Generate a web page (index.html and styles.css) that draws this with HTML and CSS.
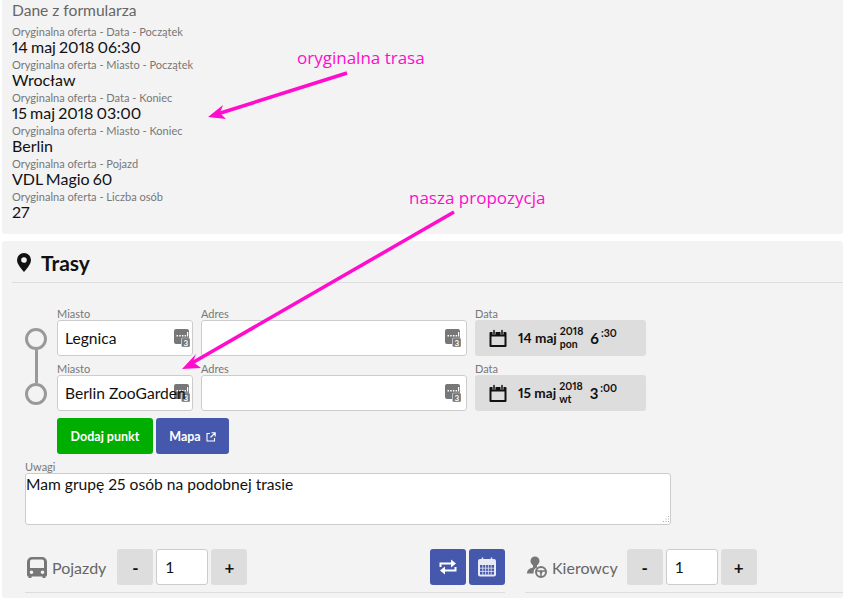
FILE: index.html
```html
<!DOCTYPE html>
<html lang="pl">
<head>
<meta charset="utf-8">
<title>Trasy</title>
<link rel="stylesheet" href="styles.css">
</head>
<body>
<svg width="0" height="0" class="defs">
  <symbol id="gsm" viewBox="0 0 16 18">
    <path d="M2 0h11a2 2 0 0 1 2 2v7H9a2 2 0 0 0-2 2v4H2a2 2 0 0 1-2-2V2a2 2 0 0 1 2-2z" fill="#777"/>
    <rect x="7.500" y="9" width="8.500" height="9" rx="1.500" fill="#777" stroke="#ccc" stroke-width=".5"/>
    <path d="M2.500 6h1.500v1.500H2.500zM5.200 6h1.500v1.500H5.200zM7.900 6h1.500v1.500H7.900zM10.600 6h1.500v1.500h-1.500zM13 3h1.200v4.500H13z" fill="#fff"/>
  </symbol>
  <symbol id="cal" viewBox="0 0 18 18">
    <path d="M1.500 3.500h15v13h-15z" fill="none" stroke="#111" stroke-width="2" stroke-linejoin="round"/>
    <path d="M1 3h16v4H1z" fill="#111"/>
    <path d="M5 1v4M13 1v4" stroke="#ddd" stroke-width="3"/>
    <path d="M5 1v3.500M13 1v3.500" stroke="#111" stroke-width="1.500" stroke-linecap="round"/>
  </symbol>
</svg>

<section class="card form-data">
  <h2 class="form-title">Dane z formularza</h2>
  <dl class="facts">
    <dt>Oryginalna oferta - Data - Początek</dt><dd>14 maj 2018 06:30</dd>
    <dt>Oryginalna oferta - Miasto - Początek</dt><dd>Wrocław</dd>
    <dt>Oryginalna oferta - Data - Koniec</dt><dd>15 maj 2018 03:00</dd>
    <dt>Oryginalna oferta - Miasto - Koniec</dt><dd>Berlin</dd>
    <dt>Oryginalna oferta - Pojazd</dt><dd>VDL Magio 60</dd>
    <dt>Oryginalna oferta - Liczba osób</dt><dd>27</dd>
  </dl>
</section>

<section class="card routes">
  <h2 class="routes-title">
    <svg class="pin" viewBox="0 0 14 19" width="14" height="19"><path fill-rule="evenodd" d="M7 0a7 7 0 0 1 7 7c0 4.500-5 9.500-7 12C5 16.500 0 11.500 0 7a7 7 0 0 1 7-7zm0 4.200a2.800 2.800 0 1 0 0 5.600 2.800 2.800 0 0 0 0-5.600z" fill="#111"/></svg>
    Trasy
  </h2>

  <div class="route">
    <div class="timeline"><span class="node"></span><span class="link"></span><span class="node"></span></div>
    <div class="stops">
      <div class="stop">
        <label class="field city"><span class="lbl">Miasto</span><span class="box"><svg class="gsm" viewBox="0 0 16 18"><use href="#gsm"/><text x="11.800" y="16.600" class="gsm-digit">3</text></svg><input class="inp" value="Legnica"></span></label>
        <label class="field addr"><span class="lbl">Adres</span><span class="box"><svg class="gsm" viewBox="0 0 16 18"><use href="#gsm"/><text x="11.800" y="16.600" class="gsm-digit">3</text></svg><input class="inp"></span></label>
        <div class="field date"><span class="lbl">Data</span>
          <div class="datebox"><svg class="cal"><use href="#cal"/></svg><span class="day">14 maj</span><span class="yw"><span>2018</span><span>pon</span></span><span class="hour">6</span><span class="min">:30</span></div>
        </div>
      </div>
      <div class="stop">
        <label class="field city"><span class="lbl">Miasto</span><span class="box"><svg class="gsm" viewBox="0 0 16 18"><use href="#gsm"/><text x="11.800" y="16.600" class="gsm-digit">3</text></svg><input class="inp" value="Berlin ZooGarden"></span></label>
        <label class="field addr"><span class="lbl">Adres</span><span class="box"><svg class="gsm" viewBox="0 0 16 18"><use href="#gsm"/><text x="11.800" y="16.600" class="gsm-digit">3</text></svg><input class="inp"></span></label>
        <div class="field date"><span class="lbl">Data</span>
          <div class="datebox"><svg class="cal"><use href="#cal"/></svg><span class="day">15 maj</span><span class="yw"><span>2018</span><span>wt</span></span><span class="hour">3</span><span class="min">:00</span></div>
        </div>
      </div>
      <div class="actions">
        <button class="btn green">Dodaj punkt</button>
        <button class="btn blue">Mapa
          <svg viewBox="0 0 10 10" width="10" height="10" class="ext"><path d="M4 1.500H1v7.500h7.500V6M5.500 .8h3.700v3.700M9 1L4.500 5.500" fill="none" stroke="#fff" stroke-width="1.100"/></svg>
        </button>
      </div>
    </div>
  </div>

  <label class="notes"><span class="lbl notes-lbl">Uwagi</span>
    <textarea class="area">Mam grupę 25 osób na podobnej trasie</textarea>
    <svg class="grip" viewBox="0 0 9 9" width="9" height="9"><path d="M7 1h1v1H7zM4.500 3.500h1v1h-1zM7 3.500h1v1H7zM2 6h1v1H2zM4.500 6h1v1h-1zM7 6h1v1H7z" fill="#aaa"/></svg>
  </label>

  <div class="counters">
    <div class="counter vehicles">
      <svg class="ico-bus" viewBox="0 0 20 21" width="20" height="21"><path fill-rule="evenodd" d="M5 0h10a5 5 0 0 1 5 5v13a1.500 1.500 0 0 1-1.500 1.500V21h-3v-1.500h-11V21h-3v-1.500A1.500 1.500 0 0 1 0 18V5a5 5 0 0 1 5-5zM3 4.500v6.500h14V4.500a2 2 0 0 0-2-2H5a2 2 0 0 0-2 2zM4.500 13.500a1.800 1.800 0 1 0 0 3.600 1.800 1.800 0 0 0 0-3.600zm11 0a1.800 1.800 0 1 0 0 3.600 1.800 1.800 0 0 0 0-3.600z" fill="#777"/></svg>
      <span class="cname">Pojazdy</span>
      <button class="step">-</button><input class="num" value="1"><button class="step">+</button>
      <div class="tools">
        <button class="tool"><svg viewBox="0 0 20 20" width="20" height="20"><path d="M2.500 10V6.500h11M17.500 10v3.500h-11" fill="none" stroke="#fff" stroke-width="2"/><path d="M13 2.500l5 4-5 4zM7 9.500l-5 4 5 4z" fill="#fff"/></svg></button>
        <button class="tool"><svg viewBox="0 0 20 20" width="20" height="20"><rect x="1" y="2" width="18" height="17.500" rx="2" fill="#e8eaf6"/><path d="M5.500 .5v4M14.500 .5v4" stroke="#e8eaf6" stroke-width="1.500"/><path d="M3 8h14v9.500H3z" fill="#4658ab"/><path d="M5.800 8v9.500M8.600 8v9.500M11.400 8v9.500M14.200 8v9.500M3 11.200h14M3 14.400h14" stroke="#e8eaf6" stroke-width=".8"/></svg></button>
      </div>
    </div>
    <div class="counter drivers">
      <svg class="ico-driver" viewBox="0 0 20 22" width="20" height="22"><circle cx="8" cy="5" r="4.500" fill="#777"/><path d="M6 9h4v2.500c-3 1-3.500 3-3.500 6H0c0-3.500 2-5 6-6z" fill="#777"/><circle cx="14" cy="16" r="5" fill="none" stroke="#777" stroke-width="2"/><circle cx="14" cy="16" r="1.500" fill="#777"/><path d="M9.500 15h9M14 16v5" stroke="#777" stroke-width="1.500"/></svg>
      <span class="cname">Kierowcy</span>
      <button class="step">-</button><input class="num" value="1"><button class="step">+</button>
    </div>
  </div>
</section>

<svg class="arrows" viewBox="0 0 843 598" width="843" height="598">
  <path d="M347 73L219 113.500" stroke="#ff0ccc" stroke-width="3.500" fill="none"/>
  <path d="M208 117L223 105L220 113L226 119z" fill="#ff0ccc"/>
  <path d="M454 212L192 363" stroke="#ff0ccc" stroke-width="3.500" fill="none"/>
  <path d="M182 369L196 354L193 362L201 368z" fill="#ff0ccc"/>
</svg>
<span class="note note-one">oryginalna trasa</span>
<span class="note note-two">nasza propozycja</span>
</body>
</html>
```

FILE: styles.css
```css
* { box-sizing: border-box; }
html, body { margin: 0; height: 598px; overflow: hidden; background: #fff; }
body { font-family: Lato, "Liberation Sans", sans-serif; font-variant-numeric: proportional-nums; color: #111; position: relative; }
.defs { position: absolute; }
.gsm-digit { font: 700 8px Lato, sans-serif; fill: #fff; text-anchor: middle; }

.card { background: #f3f3f3; margin-left: 2px; border-radius: 3px; }
.form-data { height: 234px; padding: 1px 10px 0; border-radius: 0 0 3px 3px; }
.form-title { margin: 0 0 4px; font-size: 15.600px; line-height: 19px; font-weight: 400; color: #666; }
.facts { margin: 0; }
.facts dt { font-size: 11.050px; line-height: 15px; color: #777; margin-top: 1px; }
.facts dd { margin: -1px 0 0; padding-bottom: 1px; font-size: 16px; line-height: 17px; word-spacing: -1px; color: #111; }

.routes { margin-top: 7px; height: 357px; overflow: hidden; padding: 0 0 0 10px; }
.routes-title { display: flex; align-items: center; gap: 10px; margin: 0; height: 42px; padding: 1px 0 0 5px; border-bottom: 1px solid #ddd; font-size: 21px; font-weight: 700; color: #111; }
.pin { flex: none; }

.route { display: flex; margin: 24px 0 0 13px; }
.timeline { display: flex; flex-direction: column; align-items: center; width: 22px; padding-top: 21px; flex: none; }
.node { width: 22px; height: 22px; border: 3px solid #999; border-radius: 50%; flex: none; }
.link { width: 3px; height: 33px; background: #999; flex: none; }

.stops { margin-left: 10px; display: flex; flex-direction: column; }
.stop { display: flex; gap: 8px; height: 55px; }
.field { display: flex; flex-direction: column; }
.lbl { font-size: 11px; line-height: 13px; height: 13px; color: #777; }
.city { width: 136px; }
.addr { width: 266px; }
.date { width: 171px; }
.box { position: relative; display: block; height: 36px; background: #fff; border-radius: 3px; }
.inp { position: relative; display: block; width: 100%; height: 36px; padding: 0 7px; border: 1px solid #ccc; border-radius: 3px; background: transparent; font: 15.600px Lato, sans-serif; font-variant-numeric: proportional-nums; color: #111; outline: none; }
.gsm { position: absolute; top: 9px; width: 16px; height: 18px; }
.city .gsm { right: 3px; }
.addr .gsm { right: 6px; }

.datebox { display: flex; align-items: center; height: 36px; background: #ddd; border-radius: 3px; padding-left: 14px; color: #111; }
.cal { width: 18px; height: 19px; flex: none; margin-right: 11px; }
.day { font-size: 13.600px; font-weight: 700; white-space: nowrap; }
.yw { display: flex; flex-direction: column; font-size: 10.500px; font-weight: 700; line-height: 13px; margin-left: 3px; }
.hour { font-size: 15px; font-weight: 700; margin-left: 7px; }
.min { font-size: 10.500px; font-weight: 700; margin: -10px 0 0 2px; }

.actions { display: flex; gap: 3px; margin-top: 1px; }
.btn { height: 36px; border: 0; border-radius: 3px; color: #fff; font: 700 12.500px Lato, sans-serif; padding: 0; }
.green { width: 96px; background: #00ae00; }
.blue { width: 73px; background: #4658ab; }
.ext { vertical-align: -1px; margin-left: 2px; }

.notes { position: relative; display: block; margin: 7px 0 0 13px; width: 646px; }
.notes-lbl { display: block; font-size: 11px; line-height: 12px; height: 12px; }
.area { display: block; width: 646px; height: 52px; margin-top: 0; padding: 0; border: 1px solid #ccc; border-radius: 3px; background: #fff; font: 15.600px/20px Lato, sans-serif; font-variant-numeric: proportional-nums; color: #111; outline: none; resize: none; }
.grip { position: absolute; right: 1px; bottom: 1px; }

.counters { display: flex; gap: 20px; margin: 24px 0 0 13px; }
.counter { display: flex; align-items: center; height: 44px; padding-bottom: 7px; border-bottom: 1px solid #ddd; }
.vehicles { width: 480px; padding-left: 2px; }
.drivers { width: 318px; padding-left: 2px; }
.cname { font-size: 16px; color: #666; margin: 0 11px 0 5px; }
.drivers .cname { margin-right: 9px; }
.step { width: 36px; height: 36px; border: 0; border-radius: 3px; background: #ddd; color: #111; font: 700 17px Lato, sans-serif; padding: 0; flex: none; }
.num { width: 52px; height: 36px; margin: 0 3px; padding: 0 8px; border: 1px solid #ccc; border-radius: 3px; background: #fff; font: 15.600px Lato, sans-serif; color: #111; outline: none; flex: none; }
.tools { display: flex; gap: 3px; margin-left: auto; }
.tool { width: 36px; height: 36px; border: 0; border-radius: 3px; background: #4658ab; padding: 0; display: flex; align-items: center; justify-content: center; }
.ico-bus, .ico-driver { flex: none; }

.arrows { position: absolute; left: 0; top: 0; pointer-events: none; }
.note { position: absolute; color: #ff0ccc; font: 17px "Open Sans", sans-serif; line-height: 20px; white-space: nowrap; }
.note-one { left: 297px; top: 48px; }
.note-two { left: 409px; top: 188px; }
```
